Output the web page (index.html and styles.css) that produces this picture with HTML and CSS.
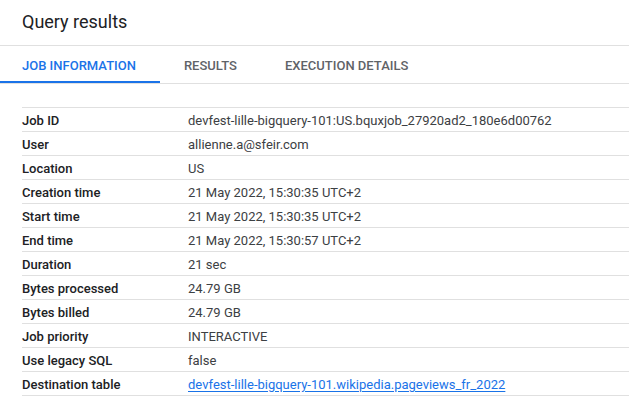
FILE: index.html
```html
<!DOCTYPE html>
<html>
<head>
<meta charset="utf-8">
<link rel="stylesheet" href="styles.css">
</head>
<body>
<div class="page">
  <header class="title-bar"><h1 class="title">Query results</h1></header>
  <nav class="tabs">
    <div class="tab active">JOB INFORMATION</div>
    <div class="tab">RESULTS</div>
    <div class="tab">EXECUTION DETAILS</div>
  </nav>
  <div class="info">
    <div class="row"><div class="label">Job ID</div><div class="value">devfest-lille-bigquery-101:US.bquxjob_27920ad2_180e6d00762</div></div>
    <div class="row"><div class="label">User</div><div class="value">allienne.a@sfeir.com</div></div>
    <div class="row"><div class="label">Location</div><div class="value">US</div></div>
    <div class="row"><div class="label">Creation time</div><div class="value">21 May 2022, 15:30:35 UTC+2</div></div>
    <div class="row"><div class="label">Start time</div><div class="value">21 May 2022, 15:30:35 UTC+2</div></div>
    <div class="row"><div class="label">End time</div><div class="value">21 May 2022, 15:30:57 UTC+2</div></div>
    <div class="row"><div class="label">Duration</div><div class="value">21 sec</div></div>
    <div class="row"><div class="label">Bytes processed</div><div class="value">24.79 GB</div></div>
    <div class="row"><div class="label">Bytes billed</div><div class="value">24.79 GB</div></div>
    <div class="row"><div class="label">Job priority</div><div class="value">INTERACTIVE</div></div>
    <div class="row"><div class="label">Use legacy SQL</div><div class="value">false</div></div>
    <div class="row"><div class="label">Destination table</div><div class="value"><a class="link" href="#">devfest-lille-bigquery-101.wikipedia.pageviews_fr_2022</a></div></div>
  </div>
</div>
</body>
</html>
```
FILE: styles.css
```css
html, body {
  margin: 0;
  padding: 0;
  background: #fff;
}
body {
  font-family: Roboto, "Liberation Sans", sans-serif;
  color: #202124;
  width: 629px;
  height: 405px;
  overflow: hidden;
}
.title-bar {
  height: 46px;
  border-bottom: 1px solid #e0e0e0;
  display: flex;
  align-items: center;
  padding-left: 22px;
  box-sizing: border-box;
}
.title {
  margin: 0;
  font-size: 18px;
  font-weight: 400;
  color: #202124;
  line-height: 24px;
  padding-bottom: 2px;
}
.tabs {
  display: flex;
  height: 37px;
  border-bottom: 1px solid #e0e0e0;
  box-sizing: content-box;
}
.tab {
  font-size: 13px;
  font-weight: 500;
  color: #5f6368;
  display: flex;
  align-items: center;
  padding: 1px 24px 0;
  letter-spacing: 0;
}
.tab:first-child {
  padding-left: 22px;
}
.tab.active {
  color: #1a73e8;
  box-shadow: inset 0 -2px 0 #1a73e8;
}
.info {
  margin-top: 23px;
  margin-left: 22px;
  border-top: 1px solid #e0e0e0;
}
.row {
  display: flex;
  height: 23px;
  box-sizing: border-box;
  height: 24px;
  padding-top: 1px;
  border-bottom: 1px solid #e0e0e0;
  align-items: center;
  font-size: 13px;
}
.label {
  width: 166px;
  font-weight: 500;
  color: #202124;
}
.value {
  color: #3c4043;
}
.link {
  color: #1a73e8;
  text-decoration: underline;
  padding: 0 2px;
  margin-left: -2px;
  text-underline-offset: 2px;
}
```
